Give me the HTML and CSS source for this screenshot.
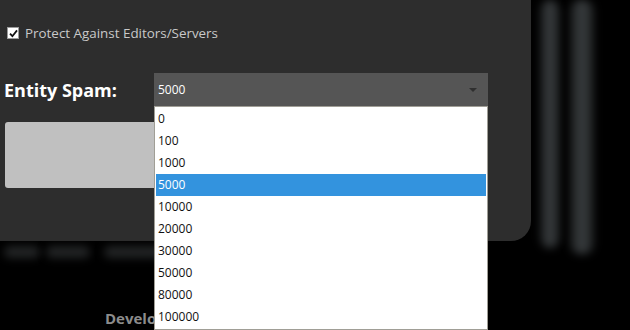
FILE: index.html
```html
<!DOCTYPE html>
<html lang="en">
<head>
<meta charset="UTF-8" />
<meta name="viewport" content="width=device-width, initial-scale=1" />
<title>Protection Settings</title>
<link rel="stylesheet" href="styles.css">
</head>
<body>
<div class="stage">
  <div class="panel">
    <label class="check-row">
      <span class="box">
        <svg width="9" height="9" viewBox="0 0 9 9"><path d="M1 4.6 L3.4 7.2 L8 1.4" fill="none" stroke="#111" stroke-width="1.8"/></svg>
      </span>
      Protect Against Editors/Servers
    </label>

    <div class="field">
      <span class="field-label">Entity Spam:</span>
      <div class="select">
        <div class="select-value">5000<span class="caret"></span></div>
        <!-- lista e hapur -->
        <ul class="options">
          <li>0</li>
          <li>100</li>
          <li>1000</li>
          <li class="selected">5000</li>
          <li>10000</li>
          <li>20000</li>
          <li>30000</li>
          <li>50000</li>
          <li>80000</li>
          <li>100000</li>
        </ul>
      </div>
    </div>

    <div class="gray-btn"></div>
  </div>

  <div class="bars">
    <div class="bar"></div>
    <div class="bar wide"></div>
  </div>
</div>

<div class="haze">
  <span class="blob b1"></span>
  <span class="blob b2"></span>
  <span class="blob b3"></span>
</div>

<footer class="credit">Developed by</footer>
</body>
</html>
```

FILE: styles.css
```css
* {
  margin: 0;
  padding: 0;
  box-sizing: border-box;
}

body {
  font-family: 'Open Sans', 'Noto Sans', sans-serif;
  background: #000;
  width: 630px;
  height: 330px;
  overflow: hidden;
}

.stage {
  display: flex;
  align-items: flex-start;
  height: 241px;
}

/* Paneli kryesor */
.panel {
  width: 531px;
  height: 241px;
  background: #2d2d2d;
  border-bottom-right-radius: 20px;
  padding: 25px 0 0 4px;
  display: flex;
  flex-direction: column;
  position: relative;
  z-index: 2;
}

.check-row {
  display: flex;
  align-items: center;
  gap: 6px;
  padding-left: 3px;
  font-size: 13.4px;
  color: #c9c9c9;
  height: 16px;
}

.box {
  width: 12px;
  height: 12px;
  background: #fff;
  border: 1px solid #9a9a9a;
  display: flex;
  align-items: center;
  justify-content: center;
}

.field {
  display: flex;
  align-items: center;
  margin-top: 32px;
}

.field-label {
  width: 150px;
  font-size: 18px;
  font-weight: 700;
  color: #fff;
}

.select {
  position: relative;
  width: 334px;
}

.select-value {
  height: 33px;
  background: #555;
  color: #fff;
  font-size: 12px;
  padding: 0 4px;
  display: flex;
  align-items: center;
  justify-content: space-between;
}

.caret {
  width: 0;
  height: 0;
  border-left: 4px solid transparent;
  border-right: 4px solid transparent;
  border-top: 4px solid #2f2f2f;
  margin-right: 7px;
}

.options {
  position: absolute;
  top: 33px;
  left: 0;
  width: 334px;
  list-style: none;
  background: #fff;
  border: 1px solid #a09e96;
  padding: 1px;
  z-index: 10;
}

.options li {
  height: 22px;
  line-height: 22px;
  font-size: 12px;
  color: #111;
  padding-left: 2px;
}

.options li.selected {
  background: #3393de;
  color: #fff;
}

.gray-btn {
  margin-top: 16px;
  margin-left: 1px;
  width: 180px;
  height: 66px;
  background: #c0c0c0;
  border-radius: 3px;
}

/* Shiritat e turbullt djathtas */
.bars {
  display: flex;
  gap: 10px;
  margin-left: 9px;
}

.bar {
  flex-shrink: 0;
  width: 20px;
  height: 248px;
  background: linear-gradient(90deg, #1c1e1f, #3a3e40 50%, #1c1e1f);
  border-radius: 10px;
  filter: blur(4px);
}

.bar.wide {
  width: 24px;
  height: 254px;
}

.haze {
  display: flex;
  gap: 6px;
  padding: 5px 0 0 4px;
  height: 22px;
}

.blob {
  height: 12px;
  background: #222425;
  border-radius: 6px;
  filter: blur(4px);
}

.b1 { width: 36px; }
.b2 { width: 44px; }
.b3 { width: 66px; margin-left: 8px; }

.credit {
  margin-top: 45px;
  padding-left: 105px;
  font-size: 15px;
  font-weight: 700;
  color: #8c8c8c;
  line-height: 20px;
}
```
